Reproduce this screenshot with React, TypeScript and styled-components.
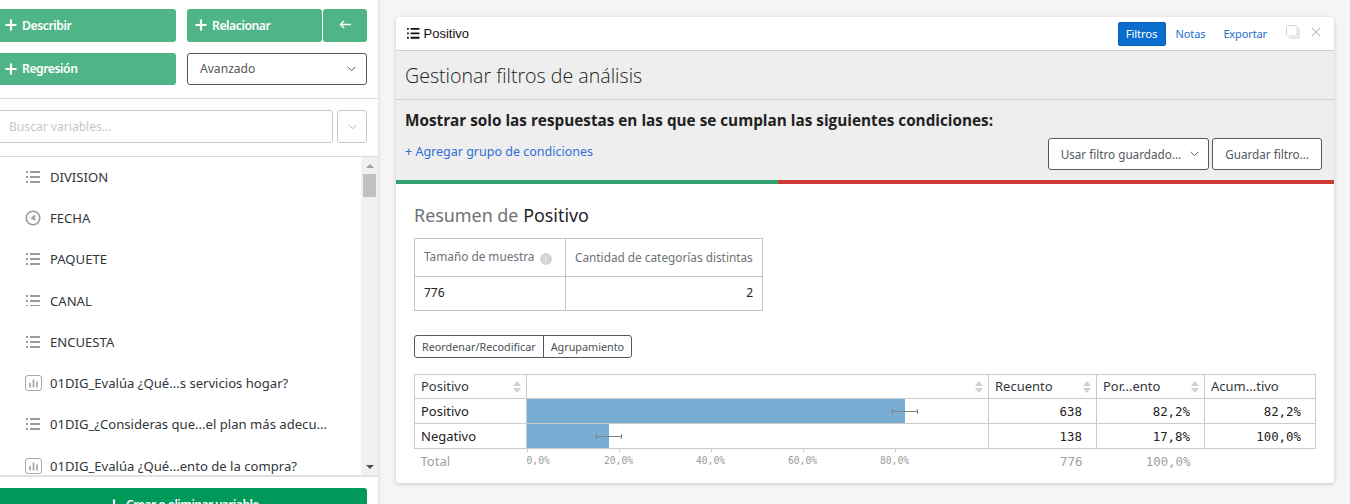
import React from 'react';
import styled, { createGlobalStyle } from 'styled-components';

const GlobalStyle = createGlobalStyle`
  html, body {
    margin: 0;
    height: 100%;
    overflow: hidden;
    background: #f5f5f5;
    font-family: "Noto Sans", "Open Sans", sans-serif;
  }
  * { box-sizing: border-box; }
`;

const Page = styled.div`
  display: flex;
  width: 1350px;
  height: 504px;
  overflow: hidden;
`;

const Sidebar = styled.aside`
  flex: 0 0 378px;
  height: 504px;
  background: #fff;
  overflow: hidden;
  box-shadow: 1px 0 3px rgba(0, 0, 0, 0.1);
`;

const SidebarInner = styled.div`
  width: 390px;
  margin-left: -12px;
  display: flex;
  flex-direction: column;
  height: 100%;
`;

const ActionGrid = styled.div`
  display: grid;
  grid-template-columns: 180px 180px;
  grid-template-rows: 33px 32px;
  column-gap: 11px;
  row-gap: 11px;
  padding: 9px 11px 0 8px;
  height: 99px;
  border-bottom: 1px solid #dcdcdc;
  flex: none;
`;

const ActionButton = styled.button`
  display: flex;
  align-items: center;
  gap: 5px;
  height: 100%;
  padding: 0 0 1px 9px;
  background: #4fb586;
  color: #fff;
  border: 0;
  border-radius: 3px;
  font: 600 12.2px "Noto Sans", sans-serif;
  letter-spacing: -0.45px;
  flex: 1;
  min-width: 0;

  svg { flex: none; }
`;

const SplitGroup = styled.div`
  display: flex;
  gap: 1px;

  ${ActionButton}:first-child { padding-left: 8px; }
`;

const BackButton = styled(ActionButton)`
  flex: 0 0 44px;
  justify-content: center;
  padding: 0 0 3px;
`;

const SelectBox = styled.div`
  display: flex;
  align-items: center;
  justify-content: space-between;
  height: 32px;
  padding: 0 10px 1px 12px;
  border: 1px solid #55585c;
  border-radius: 3px;
  color: #55585c;
  font-size: 12.1px;
`;

const SearchRow = styled.div`
  display: flex;
  gap: 4px;
  padding: 11px 11px 0 8px;
  height: 58px;
  border-bottom: 1px solid #dcdcdc;
  flex: none;
`;

const SearchInput = styled.div`
  flex: 1;
  height: 33px;
  display: flex;
  align-items: center;
  padding-left: 12px;
  border: 1px solid #c8c8c8;
  border-radius: 3px;
  color: #c6c6c6;
  font-size: 12.1px;
`;

const SearchToggle = styled.div`
  flex: 0 0 30px;
  height: 33px;
  display: flex;
  align-items: center;
  justify-content: center;
  border: 1px solid #c8c8c8;
  border-radius: 3px;
`;

const ListArea = styled.div`
  flex: none;
  height: 320px;
  display: flex;
  overflow: hidden;
  border-bottom: 2px solid #e2e2e2;
`;

const VariableList = styled.ul`
  flex: 1;
  list-style: none;
  margin: -1px 0 0;
  padding: 0;
  overflow: hidden;
`;

const VariableRow = styled.li`
  display: flex;
  align-items: center;
  height: 41.3px;
  padding-left: 36px;
  gap: 8px;
  color: #32363a;
  font-size: 13.1px;
  white-space: nowrap;
`;

const IconSlot = styled.span`
  flex: 0 0 18px;
  display: flex;
  justify-content: center;
`;

const Scrollbar = styled.div`
  flex: 0 0 17px;
  background: #f1f1f1;
  display: flex;
  flex-direction: column;
  align-items: center;
  justify-content: space-between;
  position: relative;
  padding: 7px 0 6px;
`;

const ScrollThumb = styled.div`
  position: absolute;
  top: 17px;
  left: 2px;
  width: 13px;
  height: 23px;
  background: #c1c1c1;
`;

const ArrowUp = styled.div`
  width: 0;
  height: 0;
  border-left: 4px solid transparent;
  border-right: 4px solid transparent;
  border-bottom: 4px solid #a3a3a3;
`;

const ArrowDown = styled.div`
  width: 0;
  height: 0;
  border-left: 4px solid transparent;
  border-right: 4px solid transparent;
  border-top: 4px solid #505050;
`;

const Footer = styled.div`
  padding: 11px 11px 0 8px;
`;

const CreateButton = styled.button`
  width: 100%;
  height: 33px;
  display: flex;
  align-items: center;
  justify-content: center;
  gap: 6px;
  padding: 0 0 0 4px;
  background: #00995a;
  color: #fff;
  border: 0;
  border-radius: 3px;
  font: 600 12.2px "Noto Sans", sans-serif;
  letter-spacing: -0.55px;
`;

const Main = styled.main`
  flex: 1;
  padding: 17px 16px 21px 18px;
  min-width: 0;
`;

const Card = styled.section`
  height: 466px;
  background: #fff;
  border-radius: 3px;
  box-shadow: 0 1px 4px rgba(0, 0, 0, 0.18);
  overflow: hidden;
`;

const CardHeader = styled.header`
  height: 34px;
  display: flex;
  align-items: center;
  justify-content: space-between;
  padding: 0 13px 0 11px;
  border-bottom: 1px solid #cfcfcf;
`;

const CardTitle = styled.div`
  display: flex;
  align-items: center;
  gap: 4px;
  font: 13px "Liberation Sans", Arial, sans-serif;
  color: #111;
`;

const HeaderActions = styled.div`
  display: flex;
  align-items: center;
`;

const TabButton = styled.div<{ $active?: boolean }>`
  height: 24px;
  width: ${(p) => (p.$active ? '48px' : 'auto')};
  display: flex;
  align-items: center;
  justify-content: center;
  padding: ${(p) => (p.$active ? '0' : '0 9px')};
  margin-right: ${(p) => (p.$active ? '1px' : '0')};
  border-radius: 2px;
  font-size: ${(p) => (p.$active ? '11.3px' : '11px')};
  letter-spacing: -0.12px;
  color: ${(p) => (p.$active ? '#fff' : '#1f6fd0')};
  background: ${(p) => (p.$active ? '#0b6ecf' : 'transparent')};
  border: ${(p) => (p.$active ? '1px solid #0a5fb4' : '0')};
`;

const HeaderIcons = styled.div`
  display: flex;
  align-items: center;
  gap: 11px;
  margin-left: 10px;
  padding-bottom: 3px;
`;

const TitleBand = styled.div`
  height: 49px;
  background: #eee;
  border-bottom: 1px solid #cfcfcf;
  display: flex;
  align-items: center;
  padding-left: 9px;
  font: 300 19.6px "Open Sans", sans-serif;
  color: #222;
`;

const FilterBand = styled.div`
  height: 80px;
  background: #eee;
  padding: 10px 12px 0 9px;
`;

const FilterHeading = styled.div`
  font: 700 15.3px "Open Sans", sans-serif;
  color: #222;
  line-height: 20px;
`;

const FilterRow = styled.div`
  display: flex;
  justify-content: space-between;
  align-items: flex-start;
  margin-top: 8px;
`;

const AddLink = styled.div`
  font-size: 12.5px;
  color: #2f6fd6;
  line-height: 18px;
  margin-top: 5px;
`;

const FilterButtons = styled.div`
  display: flex;
  gap: 3px;
`;

const OutlineButton = styled.div`
  height: 32px;
  display: flex;
  align-items: center;
  gap: 9px;
  padding: 0 12px;
  background: #fff;
  border: 1px solid #55585c;
  border-radius: 3px;
  color: #55585c;
  font-size: 11.7px;
  white-space: nowrap;
`;

const SavedFilterButton = styled(OutlineButton)`
  padding-right: 9px;
`;

const ColorBar = styled.div`
  height: 4px;
  display: flex;
`;

const BarSegment = styled.div<{ $color: string; $width: number }>`
  width: ${(p) => p.$width}px;
  background: ${(p) => p.$color};
  flex: ${(p) => (p.$width ? 'none' : 1)};
`;

const Content = styled.div`
  padding: 20px 18px 0 18px;
`;

const SummaryTitle = styled.h2`
  margin: 0 0 11px;
  font: 400 17.9px "Noto Sans", sans-serif;
  line-height: 23px;
  color: #6e7175;

  span { color: #1f2328; }
`;

const StatsTable = styled.table`
  border-collapse: collapse;
  table-layout: fixed;
  width: 348px;
  font-size: 11.8px;
  color: #6e7175;

  th, td {
    border: 1px solid #c4c4c4;
    font-weight: 400;
    padding: 0 9px;
  }
  th { height: 38px; padding-bottom: 2px; text-align: left; white-space: nowrap; }
`;

const StatValue = styled.td<{ $right?: boolean }>`
  height: 34px;
  padding-bottom: 2px !important;
  font-size: 12px;
  color: #222;
  text-align: ${(p) => (p.$right ? 'right' : 'left')};
`;

const InfoDot = styled.span`
  display: inline-flex;
  width: 12px;
  height: 12px;
  margin-left: 5px;
  vertical-align: -2px;
  align-items: center;
  justify-content: center;
  border-radius: 50%;
  background: #d4d4d4;
  color: #fff;
  font-size: 8px;
`;

const ToggleGroup = styled.div`
  display: inline-flex;
  margin: 24px 0 16px;
  border: 1px solid #55585c;
  border-radius: 3px;
  height: 23px;
`;

const ToggleItem = styled.div`
  display: flex;
  align-items: center;
  padding: 0 7px;
  font-size: 10.8px;
  color: #4b4e52;

  & + & { border-left: 1px solid #55585c; }
`;

const FreqTable = styled.table`
  border-collapse: collapse;
  table-layout: fixed;
  width: 901px;
  font-size: 13px;
  color: #222;

  th, td {
    font-weight: 400;
    border: 1px solid #cbcbcb;
    padding: 0;
    height: 25px;
  }
  thead th { height: 24px; padding-bottom: 1px; }
`;

const HeadCell = styled.th`
  position: relative;
  text-align: left;
  padding-left: 6px !important;
  white-space: nowrap;
  color: #32363a;
`;

const SortGlyph = styled.span`
  position: absolute;
  right: 5px;
  top: 6px;
  width: 8px;
  height: 12px;

  &::before, &::after {
    content: '';
    position: absolute;
    left: 0;
    border-left: 4px solid transparent;
    border-right: 4px solid transparent;
  }
  &::before { top: 0; border-bottom: 5px solid #cfcfcf; }
  &::after { bottom: 0; border-top: 5px solid #cfcfcf; }
`;

const LabelCell = styled.td`
  padding-left: 6px !important;
`;

const ChartCell = styled.td`
  position: relative;
`;

const Bar = styled.div`
  position: absolute;
  left: 0;
  top: 0;
  bottom: 0;
  background: #79acd3;
`;

const ErrorBar = styled.div`
  position: absolute;
  top: 50%;
  height: 5px;
  margin-top: -2px;
  border-left: 1px solid #7d8185;
  border-right: 1px solid #7d8185;

  &::before {
    content: '';
    position: absolute;
    left: 0;
    right: 0;
    top: 2px;
    height: 1px;
    background: #7d8185;
  }
`;

const NumCell = styled.td`
  text-align: right;
  padding-right: 14px !important;
  font-family: "DejaVu Sans Mono", monospace;
  font-size: 12.4px;
`;

const TotalRow = styled.tr`
  td { border: 0; height: 25px; color: #a0a0a0; }
`;

const TotalLabel = styled.td`
  padding-left: 6px !important;
`;

const AxisCell = styled.td`
  position: relative;
`;

const Tick = styled.span`
  position: absolute;
  top: -1px;
  width: 1px;
  height: 4px;
  background: #cbcbcb;
`;

const TickLabel = styled.span<{ $first?: boolean }>`
  position: absolute;
  top: 6px;
  transform: ${(p) => (p.$first ? 'none' : 'translateX(-50%)')};
  font: 9.7px "DejaVu Sans Mono", monospace;
  color: #9a9a9a;
`;

const Plus = ({ size = 12 }: { size?: number }) => (
  <svg width={size} height={size} viewBox="0 0 12 12">
    <path d="M6 .5v11M.5 6h11" stroke="#fff" strokeWidth="2.2" />
  </svg>
);

const Chevron = ({ color = '#55585c' }: { color?: string }) => (
  <svg width="9" height="6" viewBox="0 0 9 6" fill="none">
    <path d="M.7.9 4.5 4.7 8.3.9" stroke={color} strokeWidth="1" />
  </svg>
);

const ListIcon = ({ color = '#9a9a9a', size = 14 }: { color?: string; size?: number }) => (
  <svg width={size} height={size * 0.85} viewBox="0 0 14 12">
    <path d="M0 1h2M0 6h2M0 11h2M4 1h10M4 6h10M4 11h10" stroke={color} strokeWidth="2" />
  </svg>
);

const ClockIcon = () => (
  <svg width="16" height="16" viewBox="0 0 16 16" fill="none">
    <circle cx="8" cy="8" r="6.8" stroke="#9a9a9a" strokeWidth="1.6" />
    <path d="M10.5 5.6 7.2 8l3.3 1.6" stroke="#9a9a9a" strokeWidth="1.8" />
  </svg>
);

const BarsIcon = () => (
  <svg width="17" height="16" viewBox="0 0 17 16" fill="none">
    <rect x=".5" y=".5" width="16" height="15" rx="2.5" stroke="#a9a9a9" />
    <path d="M5 8v4.5M8.5 4.5v8M12 6.5v6" stroke="#a0a0a0" strokeWidth="1.6" />
  </svg>
);

const CopyIcon = () => (
  <svg width="14" height="14" viewBox="0 0 14 14" fill="none">
    <rect x=".5" y=".5" width="10.5" height="10.5" rx="1" fill="#fff" stroke="#d2d2d2" />
    <path d="M13 3v9a1 1 0 0 1-1 1H3" stroke="#d2d2d2" strokeWidth="1.2" />
  </svg>
);

const CloseIcon = () => (
  <svg width="10" height="10" viewBox="0 0 10 10">
    <path d="M.7.7l8.6 8.6M9.3.7.7 9.3" stroke="#c9c9c9" strokeWidth="1.3" />
  </svg>
);

type VariableKind = 'list' | 'clock' | 'bars';

const variables: { name: string; kind: VariableKind }[] = [
  { name: 'DIVISION', kind: 'list' },
  { name: 'FECHA', kind: 'clock' },
  { name: 'PAQUETE', kind: 'list' },
  { name: 'CANAL', kind: 'list' },
  { name: 'ENCUESTA', kind: 'list' },
  { name: '01DIG_Evalúa ¿Qué...s servicios hogar?', kind: 'bars' },
  { name: '01DIG_¿Consideras que...el plan más adecu...', kind: 'list' },
  { name: '01DIG_Evalúa ¿Qué...ento de la compra?', kind: 'bars' },
];

const rows = [
  { label: 'Positivo', count: 638, share: 82.2, cumulative: '82,2%', shareText: '82,2%', errFrom: 365, errTo: 391 },
  { label: 'Negativo', count: 138, share: 17.8, cumulative: '100,0%', shareText: '17,8%', errFrom: 69, errTo: 95 },
];

const ticks = [0, 20, 40, 60, 80];
const PX_PER_PERCENT = 4.6;

const renderIcon = (kind: VariableKind) => {
  if (kind === 'clock') return <ClockIcon />;
  if (kind === 'bars') return <BarsIcon />;
  return <ListIcon />;
};

const App: React.FC = () => {
  return (
    <Page>
      <GlobalStyle />
      <Sidebar>
        <SidebarInner>
          <ActionGrid>
            <ActionButton><Plus />Describir</ActionButton>
            <SplitGroup>
              <ActionButton><Plus />Relacionar</ActionButton>
              <BackButton>
                <svg width="13" height="9" viewBox="0 0 13 9" fill="none">
                  <path d="M12 4.5H1.5M5 1 1.5 4.5 5 8" stroke="#fff" strokeWidth="1.4" />
                </svg>
              </BackButton>
            </SplitGroup>
            <ActionButton><Plus />Regresión</ActionButton>
            <SelectBox>Avanzado<Chevron /></SelectBox>
          </ActionGrid>
          <SearchRow>
            <SearchInput>Buscar variables...</SearchInput>
            <SearchToggle><Chevron color="#b5b5b5" /></SearchToggle>
          </SearchRow>
          <ListArea>
            <VariableList>
              {variables.map((variable) => (
                <VariableRow key={variable.name}>
                  <IconSlot>{renderIcon(variable.kind)}</IconSlot>
                  {variable.name}
                </VariableRow>
              ))}
            </VariableList>
            <Scrollbar>
              <ArrowUp />
              <ScrollThumb />
              <ArrowDown />
            </Scrollbar>
          </ListArea>
          <Footer>
            <CreateButton><Plus />Crear o eliminar variable</CreateButton>
          </Footer>
        </SidebarInner>
      </Sidebar>
      <Main>
        <Card>
          <CardHeader>
            <CardTitle><ListIcon color="#111" size={12.5} />Positivo</CardTitle>
            <HeaderActions>
              <TabButton $active>Filtros</TabButton>
              <TabButton>Notas</TabButton>
              <TabButton>Exportar</TabButton>
              <HeaderIcons>
                <CopyIcon />
                <CloseIcon />
              </HeaderIcons>
            </HeaderActions>
          </CardHeader>
          <TitleBand>Gestionar filtros de análisis</TitleBand>
          <FilterBand>
            <FilterHeading>Mostrar solo las respuestas en las que se cumplan las siguientes condiciones:</FilterHeading>
            <FilterRow>
              <AddLink>+ Agregar grupo de condiciones</AddLink>
              <FilterButtons>
                <SavedFilterButton>Usar filtro guardado...<Chevron /></SavedFilterButton>
                <OutlineButton>Guardar filtro...</OutlineButton>
              </FilterButtons>
            </FilterRow>
          </FilterBand>
          <ColorBar>
            <BarSegment $color="#34a270" $width={382} />
            <BarSegment $color="#cc3a33" $width={0} />
          </ColorBar>
          <Content>
            <SummaryTitle>Resumen de <span>Positivo</span></SummaryTitle>
            <StatsTable>
              <colgroup>
                <col width="151" />
                <col width="197" />
              </colgroup>
              <thead>
                <tr>
                  <th>Tamaño de muestra<InfoDot>i</InfoDot></th>
                  <th>Cantidad de categorías distintas</th>
                </tr>
              </thead>
              <tbody>
                <tr>
                  <StatValue>776</StatValue>
                  <StatValue $right>2</StatValue>
                </tr>
              </tbody>
            </StatsTable>
            <div>
              <ToggleGroup>
                <ToggleItem>Reordenar/Recodificar</ToggleItem>
                <ToggleItem>Agrupamiento</ToggleItem>
              </ToggleGroup>
            </div>
            <FreqTable>
              <colgroup>
                <col width="112" />
                <col width="462" />
                <col width="108" />
                <col width="108" />
                <col width="111" />
              </colgroup>
              <thead>
                <tr>
                  <HeadCell>Positivo<SortGlyph /></HeadCell>
                  <HeadCell><SortGlyph /></HeadCell>
                  <HeadCell>Recuento<SortGlyph /></HeadCell>
                  <HeadCell>Por...ento<SortGlyph /></HeadCell>
                  <HeadCell>Acum...tivo</HeadCell>
                </tr>
              </thead>
              <tbody>
                {rows.map((row) => (
                  <tr key={row.label}>
                    <LabelCell>{row.label}</LabelCell>
                    <ChartCell>
                      <Bar style={{ width: row.share * PX_PER_PERCENT }} />
                      <ErrorBar style={{ left: row.errFrom, width: row.errTo - row.errFrom }} />
                    </ChartCell>
                    <NumCell>{row.count}</NumCell>
                    <NumCell>{row.shareText}</NumCell>
                    <NumCell>{row.cumulative}</NumCell>
                  </tr>
                ))}
                <TotalRow>
                  <TotalLabel>Total</TotalLabel>
                  <AxisCell>
                    {ticks.map((tick) => (
                      <React.Fragment key={tick}>
                        <Tick style={{ left: tick * PX_PER_PERCENT }} />
                        <TickLabel $first={tick === 0} style={{ left: tick * PX_PER_PERCENT }}>{tick},0%</TickLabel>
                      </React.Fragment>
                    ))}
                  </AxisCell>
                  <NumCell>776</NumCell>
                  <NumCell>100,0%</NumCell>
                  <td />
                </TotalRow>
              </tbody>
            </FreqTable>
          </Content>
        </Card>
      </Main>
    </Page>
  );
};

export default App;
